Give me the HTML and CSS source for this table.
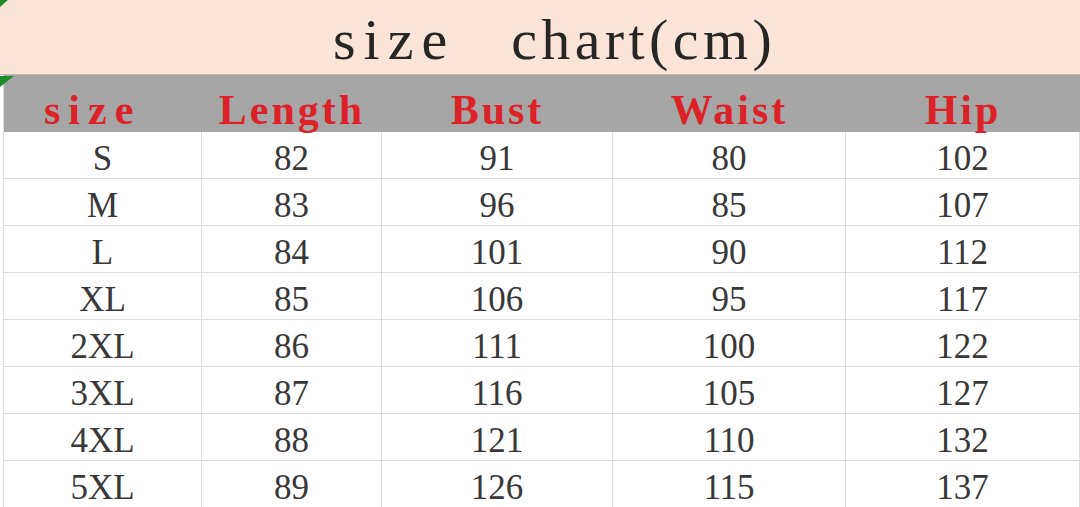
FILE: index.html
```html
<!DOCTYPE html>
<html>
<head>
<meta charset="utf-8">
<link rel="stylesheet" href="styles.css">
</head>
<body>
<div class="sheet">
  <div class="title"><span class="t-size">size</span><span class="t-chart">chart(cm)</span></div>
  <div class="grid">
    <div class="hd hd-size">size</div>
    <div class="hd">Length</div>
    <div class="hd">Bust</div>
    <div class="hd">Waist</div>
    <div class="hd">Hip</div>

    <div class="c">S</div><div class="c">82</div><div class="c">91</div><div class="c">80</div><div class="c">102</div>
    <div class="c">M</div><div class="c">83</div><div class="c">96</div><div class="c">85</div><div class="c">107</div>
    <div class="c">L</div><div class="c">84</div><div class="c">101</div><div class="c">90</div><div class="c">112</div>
    <div class="c">XL</div><div class="c">85</div><div class="c">106</div><div class="c">95</div><div class="c">117</div>
    <div class="c">2XL</div><div class="c">86</div><div class="c">111</div><div class="c">100</div><div class="c">122</div>
    <div class="c">3XL</div><div class="c">87</div><div class="c">116</div><div class="c">105</div><div class="c">127</div>
    <div class="c">4XL</div><div class="c">88</div><div class="c">121</div><div class="c">110</div><div class="c">132</div>
    <div class="c">5XL</div><div class="c">89</div><div class="c">126</div><div class="c">115</div><div class="c">137</div>
  </div>
  <span class="mark mark-top"></span>
  <span class="mark mark-head"></span>
</div>
</body>
</html>
```

FILE: styles.css
```css
html, body {
  margin: 0;
  padding: 0;
  background: #ffffff;
  overflow: hidden;
}

.sheet {
  position: relative;
  width: 1080px;
  height: 507px;
  overflow: hidden;
  font-family: "Liberation Serif", "DejaVu Serif", serif;
}

.title {
  height: 75px;
  background: #fce4d6;
  border-bottom: 1px solid #c9b8ac;
  box-sizing: border-box;
  display: flex;
  align-items: center;
  padding-left: 333px;
  font-size: 58px;
  color: #262626;
  line-height: 1;
  padding-top: 6px;
}

.t-size {
  letter-spacing: 8px;
  margin-right: 56px;
}

.t-chart {
  letter-spacing: 4.4px;
}

.grid {
  display: grid;
  grid-template-columns: 198px 180px 231px 233px 1fr;
  grid-template-rows: 57px repeat(8, 47px);
  margin-left: 3px;
  border-left: 1px solid #dcdcdc;
}

.hd {
  background: #a6a6a6;
  color: #dc2228;
  font-weight: bold;
  font-size: 42px;
  letter-spacing: 3px;
  display: flex;
  align-items: center;
  justify-content: center;
  padding-top: 13px;
  box-sizing: border-box;
}

.hd-size {
  letter-spacing: 8px;
  justify-content: flex-start;
  padding-left: 40px;
}

.c {
  display: flex;
  align-items: center;
  justify-content: center;
  font-size: 35px;
  color: #383838;
  border-right: 1px solid #dcdcdc;
  border-bottom: 1px solid #dcdcdc;
  box-sizing: border-box;
  padding-top: 8px;
}

.mark {
  position: absolute;
  left: 0;
  width: 0;
  height: 0;
  border-style: solid;
}

.mark-top {
  top: 0;
  border-width: 7px 8px 0 0;
  border-color: #1e8c2a transparent transparent transparent;
}

.mark-head {
  top: 76px;
  border-width: 11px 14px 0 0;
  border-color: #1e8c2a transparent transparent transparent;
}
```
